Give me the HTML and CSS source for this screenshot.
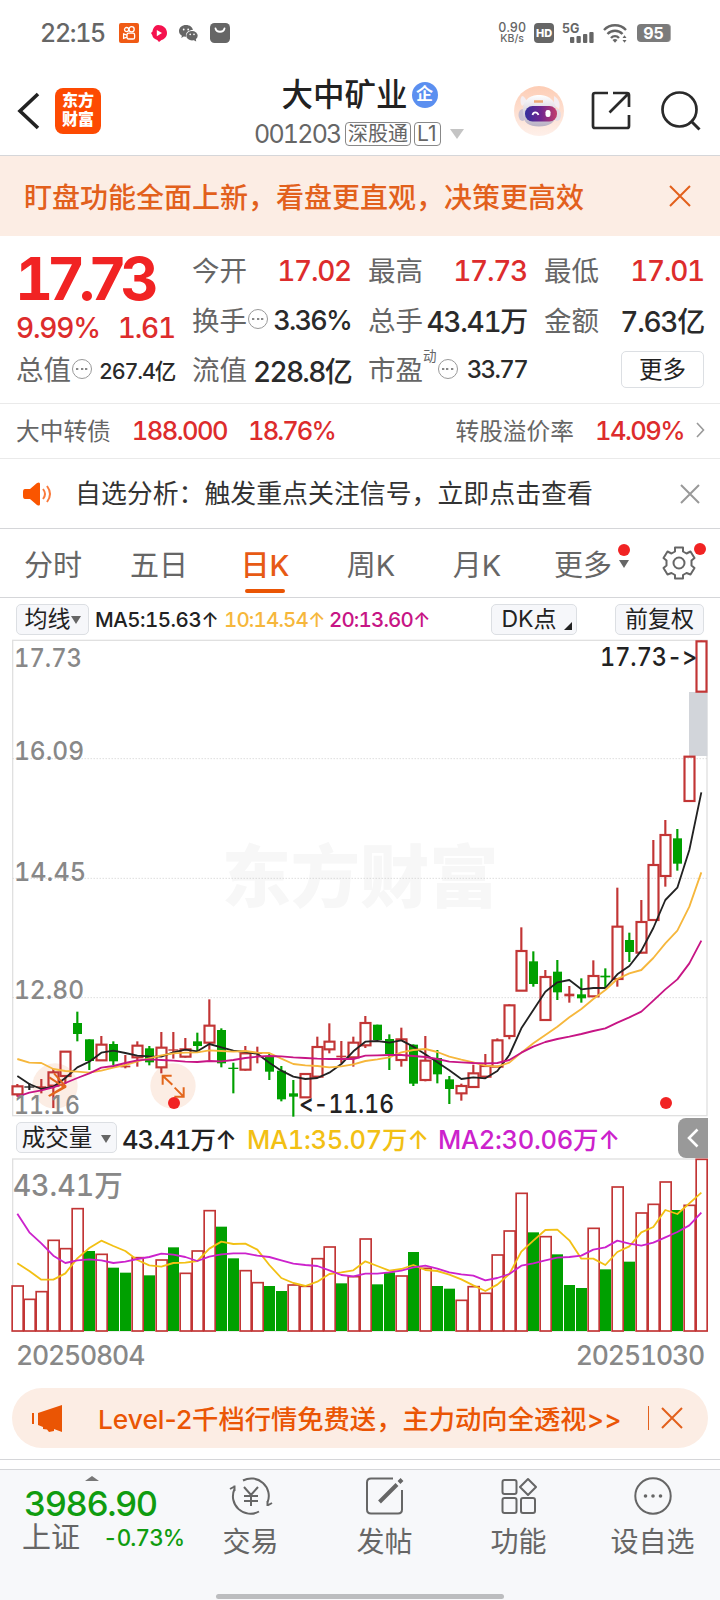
FILE: index.html
```html
<!DOCTYPE html>
<html lang="zh-CN">
<head>
  <meta charset="UTF-8" />
  <meta name="viewport" content="width=device-width, initial-scale=1" />
  <title>大中矿业 001203</title>
  <link rel="stylesheet" href="styles.css">
</head>
<body>

  <div class="status">
    <span class="clock">22:15</span>
    <svg class="app" width="20" height="20" viewBox="0 0 20 20"><rect width="20" height="20" rx="2" fill="#f05a14"/><g fill="none" stroke="#fff" stroke-width="1.3"><circle cx="7.6" cy="6.6" r="2.1"/><circle cx="12.6" cy="6.2" r="2.6"/><rect x="8" y="10.2" width="7.6" height="5.8" rx="1.6"/><path d="M8 12.2 4.6 11v4.4l3.4-1.2"/></g></svg>
    <svg class="app" width="16" height="17" viewBox="0 0 16 17"><path d="M7 0C12 0 16 3 16 8c0 4-3 6.500-5.500 7L8 17l-1.800-2C3 14 1.500 12 1.200 10L0 8l1.500-1.500C2 3 4 0 7 0Z" fill="#f5124e"/><path d="M5.800 5v6.200L11 8.100Z" fill="#fff"/></svg>
    <svg class="app" width="19" height="17" viewBox="0 0 19 17"><path d="M7 0c4 0 6.500 2.300 6.900 5-4 0-7 2.300-7 5.300l.2 1.400-2.400-.2L2.300 13l.6-2.300C1 9.600 0 8 0 6 0 2.600 3 0 7 0Z" fill="#666"/><ellipse cx="13" cy="10.700" rx="5.700" ry="4.700" fill="#666"/><path d="m14 14.800 3.200 1.800-.4-3Z" fill="#666"/><g fill="#fff"><circle cx="4.700" cy="4.500" r=".9"/><circle cx="9.200" cy="4.500" r=".9"/><circle cx="11.200" cy="9.400" r=".8"/><circle cx="15" cy="9.400" r=".8"/></g></svg>
    <svg class="app" width="20" height="20" viewBox="0 0 20 20"><rect width="20" height="20" rx="4.500" fill="#666"/><path d="M5.500 5.500c1 4.300 8 4.300 9 0" fill="none" stroke="#fff" stroke-width="1.800" stroke-linecap="round"/></svg>

    <div class="signals">
      <span class="speed">0.90<br><small>KB/s</small></span>
      <span class="hd">HD</span>
      <svg width="33" height="22" viewBox="0 0 33 22"><text x="0" y="11" class="net">5G</text><g fill="#666"><rect x="8" y="15" width="4.300" height="6" rx="1"/><rect x="14.500" y="14" width="4.300" height="7" rx="1"/><rect x="21" y="12" width="4.300" height="9" rx="1"/><rect x="27.300" y="10" width="4.300" height="11" rx="1"/></g></svg>
      <svg class="wifi" width="26" height="19" viewBox="0 0 26 19"><g fill="none" stroke="#666" stroke-width="2.400"><path d="M1 6c6-6.300 16-6.300 22 0"/><path d="M4.500 10c4-4.300 11-4.300 15 0"/><path d="M8 14c2.300-2.500 5.700-2.500 8 0"/></g><path d="m9.500 16 2.500 2.800 2.500-2.800a4 4 0 0 0-5 0Z" fill="#666"/><path d="m19.500 14 2-2.800 2 2.800Zm0 2 2 2.800 2-2.800Z" fill="#666"/></svg>
      <span class="battery">95</span>
    </div>
  </div>

  <header>
    <svg class="back" width="24" height="38" viewBox="0 0 24 38"><path d="M21 2 3 19l18 17" fill="none" stroke="#222" stroke-width="3.600"/></svg>
    <div class="logo">东方<br>财富</div>
    <div class="title">
      <h1>大中矿业<span class="corp">企</span></h1>
      <p><span class="code">001203</span><span class="tag">深股通</span><span class="tag l1">L1</span><svg width="14" height="10" viewBox="0 0 14 10"><path d="M0 0h14L7 10Z" fill="#c4c4c4"/></svg></p>
    </div>
    <svg class="robot" width="50" height="50" viewBox="0 0 50 50">
      <defs>
        <linearGradient id="halo" x1="0" y1="0" x2="0" y2="1"><stop offset="0" stop-color="#fdcdb5"/><stop offset="1" stop-color="#fef0ea"/></linearGradient>
        <linearGradient id="visor" x1="0" y1="0" x2="1" y2="0"><stop offset="0" stop-color="#33309c"/><stop offset=".5" stop-color="#71268f"/><stop offset="1" stop-color="#c33d6b"/></linearGradient>
        <linearGradient id="shell" x1="0" y1="0" x2="0" y2="1"><stop offset="0" stop-color="#fff"/><stop offset="1" stop-color="#b9b1c4"/></linearGradient>
      </defs>
      <circle cx="25" cy="25" r="25" fill="url(#halo)"/>
      <path d="M8 10c2 0 4 3 5 6l-5 4c-2-3-2-8 0-10ZM40 10c4 2 7 7 5 13l-5-4Z" fill="#f4eef2"/>
      <ellipse cx="8.500" cy="29" rx="4" ry="6" fill="#c9c2d2"/><ellipse cx="43" cy="29" rx="4" ry="6" fill="#e4dce4"/>
      <path d="M9 27C8 14 16 9 25 9s18 5 17 18c0 10-7 13.500-17 13.500S9 37 9 27Z" fill="url(#shell)"/>
      <path d="M20 15.500h9" stroke="#eda977" stroke-width="2.500"/>
      <rect x="11" y="20" width="32" height="15.500" rx="7.500" fill="url(#visor)"/>
      <path d="M18.500 29c1-3.500 4.500-3.500 6 0" fill="none" stroke="#fff" stroke-width="1.800"/><rect x="31.500" y="24" width="5" height="7" rx="2.200" fill="#fff"/>
    </svg>
    <svg class="share" width="40" height="40" viewBox="0 0 40 40"><path d="M17 2H4Q2 2 2 4v31q0 2 2 2h32q2 0 2-2V24M22 2h14q2 0 2 2v12M37 3 18.500 21.500" fill="none" stroke="#2a2a2a" stroke-width="2.700"/></svg>
    <svg class="search" width="40" height="40" viewBox="0 0 40 40"><circle cx="18.500" cy="18.500" r="17" fill="none" stroke="#2a2a2a" stroke-width="2.700"/><path d="m30.500 30.500 8 8" stroke="#2a2a2a" stroke-width="3"/></svg>
  </header>

  <div class="banner">
    <span>盯盘功能全面上新，看盘更直观，决策更高效</span>
    <svg width="22" height="22" viewBox="0 0 22 22"><path d="m1 1 20 20M21 1 1 21" stroke="#e2601c" stroke-width="2"/></svg>
  </div>

  <section class="quote">
    <div class="last">
      <strong>17.73</strong>
      <div class="change"><span>9.99%</span><span>1.61</span></div>
    </div>
    <div class="cell"><span class="label">今开</span><b class="up">17.02</b></div>
    <div class="cell"><span class="label">最高</span><b class="up">17.73</b></div>
    <div class="cell"><span class="label">最低</span><b class="up">17.01</b></div>
    <div class="cell"><span class="label">换手</span><i class="info"></i><b class="turnover">3.36%</b></div>
    <div class="cell"><span class="label">总手</span><b>43.41万</b></div>
    <div class="cell"><span class="label">金额</span><b>7.63亿</b></div>
    <div class="cell"><span class="label">总值</span><i class="info"></i><b class="sm">267.4亿</b></div>
    <div class="cell"><span class="label">流值</span><b class="float">228.8亿</b></div>
    <div class="cell"><span class="label">市盈</span><sup>动</sup><i class="info"></i><b class="md">33.77</b></div>
    <button class="more">更多</button>
  </section>

  <div class="bond">
    <span class="name">大中转债</span><b>188.000</b><b class="pct">18.76%</b>
    <span class="name right">转股溢价率</span><b class="rate">14.09%</b>
    <svg width="9" height="16" viewBox="0 0 9 16"><path d="m1 1 6.500 7L1 15" fill="none" stroke="#999" stroke-width="1.600"/></svg>
  </div>

  <div class="notice">
    <svg width="30" height="24" viewBox="0 0 30 24"><path d="M2 7h5l7-6q3-1.500 3 1v20q0 2.500-3 1l-7-6H2q-2 0-2-3V10q0-3 2-3Z" fill="#fa5500"/><path d="M20 7q4 5 0 10M24 4q6 8 0 16" fill="none" stroke="#fa7a3c" stroke-width="2"/></svg>
    <span>自选分析：触发重点关注信号，立即点击查看</span>
    <svg width="20" height="20" viewBox="0 0 20 20"><path d="m1 1 18 18M19 1 1 19" stroke="#999" stroke-width="2"/></svg>
  </div>

  <nav class="tabs">
    <a>分时</a>
    <a>五日</a>
    <a class="active">日K</a>
    <a>周K</a>
    <a>月K</a>
    <a class="menu">更多<i class="dot"></i><i class="caret"></i></a>
    <a class="gear"><svg width="34" height="34" viewBox="0 0 34 34"><path d="M13 1.500h8v4l3.500 2 4-2 4 6.500-3 2.500v5l3 2.500-4 6.500-4-1.500-3.500 2v3.500h-8v-3.500l-3.500-2-4 1.500-4-6.500 3-2.500v-5l-3-2.500 4-6.500 4 2 3.500-2Z" fill="none" stroke="#666" stroke-width="2" stroke-linejoin="round"/><circle cx="17" cy="17" r="5.500" fill="none" stroke="#666" stroke-width="2"/></svg><i class="dot"></i></a>
  </nav>

  <div class="ma-row">
    <button>均线<i class="caret"></i></button>
    <span class="ma5">MA5:15.63↑</span><span class="ma10">10:14.54↑</span><span class="ma20">20:13.60↑</span>
    <button class="dk">DK点<i class="corner"></i></button>
    <button class="adj">前复权</button>
  </div>

  <svg id="price" class="chart" width="720" height="476" viewBox="0 0 2160 1428"></svg>

  <div class="vol-row">
    <button>成交量<i class="caret"></i></button>
    <span class="v0">43.41万↑</span><span class="v1">MA1:35.07万↑</span><span class="v2">MA2:30.06万↑</span>
    <div class="collapse"><svg width="12" height="20" viewBox="0 0 12 20"><path d="m10.500 1.500-8.500 8.500 8.500 8.500" fill="none" stroke="#fff" stroke-width="2.600"/></svg></div>
  </div>

  <svg id="volume" class="chart" width="720" height="176" viewBox="0 24 2160 528"></svg>

  <div class="dates"><span>20250804</span><span>20251030</span></div>

  <div class="promo">
    <svg width="31" height="27" viewBox="0 0 31 27"><path d="M1 8v11" stroke="#ea5504" stroke-width="2"/><path d="M6 8 30 0v27l-8-3v2l-5 1-2-2.500-4-.5v-2l-5-2Z" fill="#ea5504"/></svg>
    <span class="text">Level-2千档行情免费送，主力动向全透视&gt;&gt;</span>
    <i class="bar"></i>
    <svg width="22" height="22" viewBox="0 0 22 22"><path d="m1 1 20 20M21 1 1 21" stroke="#e2601c" stroke-width="2"/></svg>
  </div>

  <footer>
    <div class="index">
      <i class="tri"></i>
      <b>3986.90</b>
      <p><span>上证</span><em>-0.73%</em></p>
    </div>
    <a><svg width="44" height="38" viewBox="0 0 44 38" fill="none" stroke="#666" stroke-width="2"><path d="M14 3.500a17.500 17.500 0 0 1 24.500 22M38.500 29v-5M38.500 28.500l4.500-2.500M30 34.500A17.500 17.500 0 0 1 5.500 12M5.500 8.500V14M5.500 9.500 1 12M15 10l7 8 7-8M22 18v11M15 19h14M15 24h14"/></svg>交易</a>
    <a><svg width="38" height="38" viewBox="0 0 38 38" fill="none" stroke="#666" stroke-width="2"><path d="M27 1.500H5Q1 1.500 1 5.500v27q0 4 4 4h27q4 0 4-4V13"/><path d="M13.500 25 31 7.500M33 5.500 36 2.500" stroke-width="4"/></svg>发帖</a>
    <a><svg width="36" height="38" viewBox="0 0 36 38" fill="none" stroke="#666" stroke-width="2"><rect x="1.500" y="3" width="14" height="14" rx="2"/><path d="m27 2 8 8-8 8-8-8Z" stroke-linejoin="round"/><rect x="1.500" y="21" width="14" height="15" rx="2"/><rect x="20" y="21" width="14" height="15" rx="2"/></svg>功能</a>
    <a><svg width="38" height="38" viewBox="0 0 38 38"><circle cx="19" cy="19" r="17.700" fill="none" stroke="#666" stroke-width="2"/><g fill="#666"><circle cx="11.500" cy="19" r="1.800"/><circle cx="19" cy="19" r="1.800"/><circle cx="26.500" cy="19" r="1.800"/></g></svg>设自选</a>
    <div class="home"></div>
  </footer>

  <script src="chart.js"></script>
</body>
</html>
```
FILE: styles.css
```css
/* Reset & Base */
* { box-sizing: border-box; margin: 0; padding: 0; }
body {
  width: 720px;
  height: 1600px;
  overflow: hidden;
  font-family: Inter, 'Noto Sans CJK SC', sans-serif;
  font-feature-settings: 'tnum' 1, 'calt' 0;
  background: #fff;
  color: #222;
}
svg { display: block; flex-shrink: 0; }
i, em { font-style: normal; }
button {
  font: inherit;
  font-feature-settings: inherit;
  color: #222;
  background: #f6f7fa;
  border: 1px solid #dcdfe3;
  border-radius: 5px;
  white-space: nowrap;
}
b { font-weight: 500; letter-spacing: -.045em; }
.caret {
  display: inline-block;
  border: 5px solid transparent;
  border-top: 8px solid #666;
  border-bottom: 0;
}

/* Status bar */
.status {
  height: 66px;
  padding: 0 49px 0 40px;
  display: flex;
  align-items: center;
  color: #666;
}
.clock {
  width: 79px;
  font-size: 25px;
  font-weight: 500;
  letter-spacing: -1.300px;
}
.app { margin-right: 12px; }
.signals {
  margin-left: auto;
  display: flex;
  align-items: center;
  gap: 8px;
}
.speed { font-size: 12.500px; line-height: 10px; font-weight: 500; text-align: center; }
.speed small { font-size: 10.500px; }
.hd {
  width: 20px;
  height: 20px;
  border-radius: 4px;
  background: #666;
  color: #fff;
  font-size: 11px;
  font-weight: 800;
  line-height: 20px;
  text-align: center;
}
.net { font-size: 12.500px; font-weight: 700; fill: #666; }
.battery {
  width: 34px;
  height: 18px;
  border-radius: 4px;
  background: #7b7b7b;
  color: #fff;
  font-size: 16px;
  font-weight: 700;
  line-height: 19px;
  text-align: center;
  border-right: 1px solid #aaa;
}

/* Header */
header {
  height: 90px;
  padding: 0 19px 0 17px;
  display: flex;
  align-items: center;
  border-bottom: 1px solid #d5d6d9;
}
.logo {
  width: 46px;
  height: 46px;
  margin-left: 14px;
  padding-top: 3px;
  border-radius: 8px;
  background: #fd4a02;
  color: #fff;
  font-size: 16px;
  font-weight: 900;
  line-height: 19px;
  text-align: center;
}
.title { width: 210px; margin: 4px 0 0 153px; }
.title h1 {
  display: flex;
  align-items: center;
  justify-content: center;
  gap: 4px;
  height: 40px;
  padding-left: 1px;
  font-size: 31.500px;
  line-height: 38px;
  font-weight: 500;
}
.corp {
  width: 26px;
  height: 26px;
  border-radius: 50%;
  background: #5b8ff0;
  color: #fff;
  font-size: 17px;
  font-weight: 700;
  line-height: 25px;
  text-align: center;
}
.title p { display: flex; align-items: center; height: 36px; padding-top: 2px; color: #666; }
.code { width: 91px; font-size: 25px; font-weight: 400; letter-spacing: -1.800px; }
.tag {
  height: 24px;
  padding: 0 2px;
  margin-right: 3px;
  border: 1px solid #888;
  border-radius: 4px;
  font-size: 20px;
  line-height: 22px;
  white-space: nowrap;
}
.l1 { width: 27px; margin-right: 9px; font-size: 21px; font-feature-settings: normal; }
.robot { margin-left: 50px; }
.share { margin-left: 27px; }
.search { margin-left: auto; }

/* Banner */
.banner {
  height: 80px;
  padding: 0 29px 0 24px;
  display: flex;
  align-items: center;
  justify-content: space-between;
  background: #fcede4;
  color: #e2601c;
  font-size: 28px;
  font-weight: 500;
}

/* Quote */
.quote {
  height: 168px;
  padding: 11px 16px 0 17px;
  display: grid;
  grid-template-columns: 158px 158px 158px 159px;
  grid-template-rows: repeat(3, 49.500px);
  column-gap: 18px;
  border-bottom: 1px solid #eaeaea;
}
.last { grid-row: span 2; color: #f12323; }
.last strong {
  display: block;
  height: 64px;
  margin-left: -2px;
  font-size: 59px;
  line-height: 64px;
  font-weight: 700;
  letter-spacing: -6.200px;
}
.change {
  display: flex;
  justify-content: space-between;
  margin-left: -1px;
  font-size: 28px;
  line-height: 34px;
  font-weight: 500;
  letter-spacing: -1.200px;
  color: #dd2c2c;
}
.cell {
  display: flex;
  align-items: center;
  font-size: 28px;
  white-space: nowrap;
}
.label { margin: -5px 0 0 -1px; color: #666; font-size: 27.500px; }
.cell b { margin: -2px 0 0 auto; color: #2a2a2a; }
.cell b.up { color: #dd2c2c; }
.cell b.turnover { font-size: 27px; letter-spacing: -.065em; }
.cell b.float { letter-spacing: -.06em; }
.cell b.sm { font-size: 21.500px; letter-spacing: -.055em; }
.cell b.md { font-size: 24px; letter-spacing: -.07em; }
.cell sup { align-self: flex-start; font-size: 13.500px; line-height: 21px; color: #666; }
.info {
  width: 20px;
  height: 20px;
  margin: -4px 0 0 1px;
  border: 1.500px solid #999;
  border-radius: 50%;
  background: radial-gradient(circle, #888 1px, transparent 1.500px) center / 4.500px 20px no-repeat,
    radial-gradient(circle, #888 1px, transparent 1.500px) 2px center / 4.500px 20px no-repeat,
    radial-gradient(circle, #888 1px, transparent 1.500px) 11px center / 4.500px 20px no-repeat;
}
.more {
  justify-self: end;
  align-self: center;
  width: 83px;
  height: 37px;
  margin-top: -3px;
  background: #fff;
  font-size: 23.500px;
  line-height: 33px;
}

/* Convertible bond */
.bond {
  height: 55px;
  padding: 0 15px 2px 17px;
  display: flex;
  align-items: center;
  border-bottom: 1px solid #eaeaea;
  font-size: 25.500px;
}
.bond .name { font-size: 23.700px; color: #666; margin: -1px 0 0 -1px; }
.bond b { margin-left: 21px; letter-spacing: -.06em; color: #dd2c2c; }
.bond .pct { letter-spacing: -.075em; }
.bond .right { margin-left: auto; }
.bond svg { margin-left: 12px; }

/* Notice */
.notice {
  height: 70px;
  padding: 0 20px 0 23px;
  display: flex;
  align-items: center;
  border-bottom: 1px solid #d5d6d9;
  font-size: 25.900px;
  color: #333;
}
.notice span { flex: 1; margin: -5px 0 0 22px; }

/* Tabs */
.tabs {
  height: 69px;
  display: grid;
  grid-template-columns: repeat(6, 106px) 84px;
  border-bottom: 1px solid #d5d6d9;
  text-align: center;
  font-size: 29px;
  line-height: 73px;
  color: #666;
}
.tabs a { position: relative; }
.active { color: #e75a14; font-weight: 500; }
.active::after {
  content: '';
  position: absolute;
  left: 33px;
  top: 60px;
  width: 40px;
  height: 4px;
  border-radius: 2px;
  background: #ea5504;
}
.dot {
  position: absolute;
  width: 12px;
  height: 12px;
  border-radius: 50%;
  background: #f12323;
}
.menu .dot { left: 88px; top: 15px; }
.menu .caret { position: absolute; left: 89px; top: 31px; }
.gear svg { margin: 17px 0 0 26px; }
.gear .dot { left: 58px; top: 14px; }

/* Moving averages */
.ma-row, .vol-row { display: flex; align-items: center; white-space: nowrap; }
.ma-row { height: 42px; padding: 0 16px; font-size: 20.500px; font-weight: 500; letter-spacing: -.850px; }
.ma-row button { height: 31px; font-size: 23px; font-weight: 400; line-height: 27px; letter-spacing: 0; }
.ma-row button:first-child { width: 73px; margin-right: 6px; }
.ma-row .caret { margin-bottom: 3px; }
.ma5 { width: 129px; letter-spacing: -.500px; }
.ma10 { width: 105px; color: #f6b73c; }
.ma20 { color: #c71585; }
.ma-row .dk { position: relative; width: 86px; margin-left: auto; padding-right: 10px; }
.corner {
  position: absolute;
  right: 4px;
  bottom: 4px;
  border: 4px solid #222;
  border-top-color: transparent;
  border-left-color: transparent;
}
.ma-row .adj { width: 89px; margin-left: 38px; }

/* Charts */
.chart { overflow: visible; }
.chart text { font-size: 78px; }
.axis { fill: #888; font-weight: 500; }
.mark { fill: #222; font-weight: 500; }
.chart .watermark { font-size: 204px; font-weight: 900; fill: #f7f7f7; }

.vol-row { height: 42px; padding: 0 12px 0 16px; font-size: 25.500px; font-weight: 500; letter-spacing: -.300px; }
.vol-row button { width: 101px; height: 31px; font-size: 23.500px; font-weight: 400; line-height: 27px; letter-spacing: 0; }
.vol-row button .caret { margin: 0 0 3px 9px; }
.v0 { width: 125px; margin-left: 5px; letter-spacing: -.900px; }
.v1 { width: 191px; color: #f2c014; }
.v2 { color: #cc22cc; }
.collapse {
  width: 30px;
  height: 40px;
  margin: 2px 0 0 auto;
  display: grid;
  place-items: center;
  border-radius: 8px 0 0 8px;
  background: #999;
}

.dates {
  height: 54px;
  padding: 3px 16px 0;
  display: flex;
  justify-content: space-between;
  font-size: 26.500px;
  line-height: 36px;
  font-weight: 500;
  letter-spacing: -1.150px;
  color: #888;
}

/* Promo */
.promo {
  height: 60px;
  margin: 0 12px;
  padding: 0 25px 0 20px;
  display: flex;
  align-items: center;
  border-radius: 30px;
  background: #fcede4;
  color: #ea5504;
  font-size: 26.300px;
  font-weight: 500;
}
.promo .text { margin: -2px 0 0 35px; white-space: nowrap; font-feature-settings: 'calt' 0; }
.promo .bar { width: 1px; height: 24px; margin: 0 12px 0 auto; background: #e2601c; }

/* Footer */
footer {
  position: relative;
  height: 142px;
  margin-top: 11px;
  padding-top: 10px;
  display: grid;
  grid-template-columns: 183px repeat(4, 134px);
  border-top: 1px solid #d5d6d9;
  background: linear-gradient(#fff 9px, #d5d6d9 9px, #d5d6d9 10px, #f7f8fa 10px);
  color: #666;
}
footer a { display: flex; flex-direction: column; align-items: center; padding: 7px 0 0 1px; font-size: 28px; line-height: 54px; }
.index { padding: 6px 0 0 23px; white-space: nowrap; }
.tri {
  display: block;
  width: 14px;
  margin-left: 62px;
  border: 7px solid transparent;
  border-top: 0;
  border-bottom: 5px solid #777;
}
.index b { display: block; padding: 2px 0 0 1px; font-size: 34.500px; line-height: 42px; font-weight: 500; letter-spacing: -.045em; color: #109c10; }
.index p { display: flex; align-items: center; gap: 23px; font-size: 29px; line-height: 26px; }
.index p span { margin-left: -1px; }
.index em { font-size: 22.500px; font-weight: 500; letter-spacing: -.900px; color: #109c10; }
.home {
  position: absolute;
  left: 216px;
  bottom: 2px;
  width: 288px;
  height: 5px;
  border-radius: 3px;
  background: #bcbdbf;
}
```
FILE: chart.js
```js
// one day every 36 units, first day centred on 52
const STEP = 36, FIRST = 52;
const RED = '#c23535', GREEN = '#00a000', BLACK = '#222';
const x = i => FIRST + STEP * i;
const shift = (base, list) => list.map(v => v + base);

const rect = (x, y, w, h, attrs) => `<rect x="${x}" y="${y}" width="${w}" height="${h}" ${attrs}/>`;
const line = (x1, y1, x2, y2, attrs) => `<line x1="${x1}" y1="${y1}" x2="${x2}" y2="${y2}" ${attrs}/>`;
const text = (x, y, len, cls, str) => `<text x="${x}" y="${y}" textLength="${len}" lengthAdjust="spacingAndGlyphs" class="${cls}">${str}</text>`;
const curve = (ys, color) => `<polyline points="${ys.map((y, i) => x(i) + ',' + y).join(' ')}" fill="none" stroke="${color}" stroke-width="5.5" stroke-linejoin="round"/>`;

// [high, body top, body bottom, low, colour]
const early = [
  [312,319,343,350,'r'],[310,319,323,330,'k'],[297,319,324,340,'r'],[267,277,317,384,'r'],[215,215,288,312,'r'],
  [95,129,162,184,'g'],[178,178,243,270,'g'],[168,194,241,241,'r'],[184,192,244,256,'g'],[225,257,262,265,'r'],
  [184,197,232,260,'r'],[198,205,247,256,'g'],[156,203,262,280,'r'],[156,208,212,236,'r'],[174,208,230,233,'r'],
  [158,184,198,214,'g'],[58,137,188,240,'r'],[145,150,250,262,'g'],[248,263,267,340,'g'],[198,220,269,272,'r'],
  [200,217,222,250,'r'],[222,228,275,300,'g'],[258,272,358,364,'g'],[300,340,350,410,'g'],[282,282,352,352,'r'],
  [170,201,290,292,'r'],[130,185,208,220,'r'],[183,227,232,250,'r'],[170,188,232,260,'r']
];
const late = [
  [348,369,436,444,'r'],[374,374,420,420,'g'],[403,417,462,510,'g'],[383,418,480,500,'r'],[433,434,551,558,'g'],
  [408,482,540,544,'r'],[450,474,523,550,'g'],[528,538,567,612,'g'],[551,558,580,602,'r'],[494,520,561,561,'r'],
  [462,498,530,534,'r'],[415,421,500,500,'r'],[313,316,408,418,'r'],[82,153,272,272,'r'],[154,184,252,260,'g'],
  [210,231,360,360,'r'],[180,215,277,300,'g'],[258,281,289,308,'r'],[235,283,295,308,'g'],[181,228,289,289,'r'],
  [205,227,232,262,'g'],[-37,80,237,260,'r'],[98,120,156,186,'g'],[0,66,158,160,'r'],[-180,-105,60,60,'r'],
  [-240,-195,-72,-40,'r'],[-213,-185,-109,-88,'g'],[-432,-430,-297,-297,'r'],[-778,-776,-625,-625,'r']
];
const candles = [
  ...early.map(c => [...shift(1020, c.slice(0, 4)), c[4]]),
  ...late.map(c => [...shift(780, c.slice(0, 4)), c[4]])
];

const ma5 = [
  ...shift(1020, [288,312,327,320,294,262,245,218,212,219,227,229,230,217,209,214,192,202,212,216,221,248,272,290,297,294,278,252,214]),
  ...shift(780, [425,423,428,421,440,463,487,511,537,532,535,513,465,385,330,275,247,240,268,264,264,223,198,152,84,0,-37,-150,-323])
];
const ma10 = [
  ...shift(1020, [237,248,249,267,273,275,278,272,263,255,244,235,226,220,218,217,211,213,215,213,218,219,236,252,256,258,262,259,253]),
  ...shift(780, [483,478,472,457,450,447,456,470,479,487,497,500,488,458,430,405,380,352,327,297,270,237,220,210,174,130,92,20,-83])
];
const ma20 = [
  ...shift(1020, [350,338,331,322,309,294,280,263,258,249,241,238,240,242,245,246,243,244,240,234,230,228,229,232,234,236,237,237,237]),
  ...shift(780, [467,466,465,465,468,471,477,485,487,489,490,489,480,458,440,426,417,410,402,393,385,368,352,335,302,268,238,190,122])
];

function candle([high, top, bottom, low, c], i) {
  const color = { r: RED, g: GREEN, k: BLACK }[c];
  const attrs = `stroke="${color}" stroke-width="6.5"`;
  const cx = x(i);
  if (bottom - top < 10) {
    return line(cx, high, cx, low, attrs) + rect(cx - 15, top, 30, bottom - top, `fill="${color}"`);
  }
  if (c === 'g') {
    return line(cx, high, cx, low, attrs) + rect(cx - 13, top, 27, bottom - top, `fill="${color}"`);
  }
  return line(cx, high, cx, top, attrs) + line(cx, bottom, cx, low, attrs) +
    rect(cx - 14.5, top, 30, bottom - top, `fill="none" ${attrs}`);
}

const grid = [356, 715, 1073].map(y => line(38, y, 2121, y, 'stroke="#ccc" stroke-width="3" stroke-dasharray="3 6"')).join('');

document.getElementById('price').innerHTML =
  text(665, 785, 830, 'watermark', '东方财富') +
  rect(38, 1, 2083, 1426, 'fill="none" stroke="#e0e0e0" stroke-width="4"') + grid +
  '<circle cx="165" cy="1338" r="68" fill="#fcede4"/><circle cx="519" cy="1338" r="68" fill="#fcede4"/>' +
  rect(2067, 156, 55, 192, 'fill="#d2d5da"') +
  candles.map(candle).join('') +
  curve(ma5, '#222') + curve(ma10, '#f6b73c') + curve(ma20, '#c71585') +
  // drawing and full screen buttons
  `<g fill="none" stroke="#e2661c" stroke-width="6">
    <path d="M148 1312l46 30-46 26M162 1300l34 38-50 30"/>
    <path d="M488 1334v-27h27M489 1308l28 26M524 1343l26 26M551 1342v28h-28"/>
  </g>` +
  '<circle cx="522" cy="1389" r="18" fill="#f12323"/><circle cx="1998" cy="1389" r="18" fill="#f12323"/>' +
  text(42, 81, 204, 'axis', '17.73') + text(42, 360, 210, 'axis', '16.09') +
  text(42, 722, 216, 'axis', '14.45') + text(42, 1077, 210, 'axis', '12.80') +
  text(42, 1421, 198, 'axis', '11.16') +
  text(1800, 78, 292, 'mark', '17.73-&gt;') + text(896, 1418, 286, 'mark', '&lt;-11.16');

// bar tops, one per day
const volume = [
  408,448,425,271,296,176,303,313,353,368,323,376,330,292,370,303,182,230,325,362,398,408,423,405,409,326,291,400,380,
  267,403,367,378,306,355,408,416,451,410,430,315,243,130,247,260,313,405,414,235,358,111,335,189,163,96,180,166,28
];
const down = [6,8,9,11,13,17,18,21,22,27,30,31,33,35,36,43,45,46,47,49,51,55];
const BASE = 543;

const vma1 = [
  340,363,389,389,370,325,294,272,288,303,330,346,350,339,338,333,296,275,282,281,299,345,384,399,408,395,372,367,361,
  334,348,362,357,345,360,363,374,388,406,423,404,372,305,272,240,239,271,326,326,345,306,289,247,231,180,192,160,128
];
const vma2 = [
  191,247,280,317,339,331,328,331,339,335,327,321,311,314,321,333,320,313,310,310,317,321,331,341,345,348,361,375,379,
  371,371,367,362,352,347,356,367,373,377,391,384,372,347,340,331,323,321,317,299,292,272,281,287,278,262,246,226,188
];

document.getElementById('volume').innerHTML =
  rect(38, 27, 2083, 516, 'fill="none" stroke="#e0e0e0" stroke-width="4"') +
  volume.map((top, i) => down.includes(i)
    ? rect(x(i) - 16, top, 33, BASE - top, `fill="${GREEN}"`)
    : rect(x(i) - 15.5, top, 33, BASE - top, `fill="#fff" stroke="${RED}" stroke-width="5"`)).join('') +
  curve(vma1, '#f2c014') + curve(vma2, '#cc22cc') +
  `<text x="38" y="138" textLength="330" lengthAdjust="spacingAndGlyphs" class="axis" style="font-size:88px">43.41万</text>`;
```
